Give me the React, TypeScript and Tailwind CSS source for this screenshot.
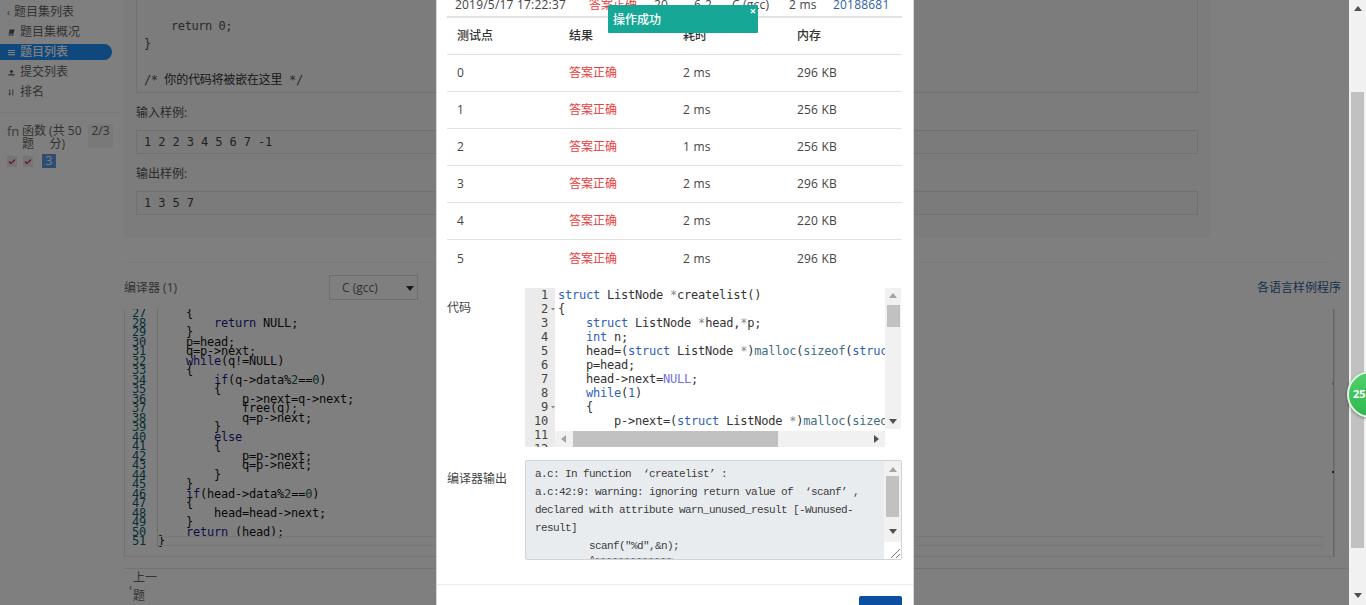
import { Fragment } from 'react'

const sans = { fontFamily: '"Open Sans","Noto Sans CJK SC",sans-serif' }

const testPoints = [
  ['0', '2 ms', '296 KB'],
  ['1', '2 ms', '256 KB'],
  ['2', '1 ms', '256 KB'],
  ['3', '2 ms', '296 KB'],
  ['4', '2 ms', '220 KB'],
  ['5', '2 ms', '296 KB'],
]

const problemCode: [number, string][] = [
  [26, '    if(head==NULL)'],
  [27, '    {'],
  [28, '        return NULL;'],
  [29, '    }'],
  [30, '    p=head;'],
  [31, '    q=p->next;'],
  [32, '    while(q!=NULL)'],
  [33, '    {'],
  [34, '        if(q->data%2==0)'],
  [35, '        {'],
  [36, '            p->next=q->next;'],
  [37, '            free(q);'],
  [38, '            q=p->next;'],
  [39, '        }'],
  [40, '        else'],
  [41, '        {'],
  [42, '            p=p->next;'],
  [43, '            q=p->next;'],
  [44, '        }'],
  [45, '    }'],
  [46, '    if(head->data%2==0)'],
  [47, '    {'],
  [48, '        head=head->next;'],
  [49, '    }'],
  [50, '    return (head);'],
  [51, '}'],
]

const submittedCode = [
  'struct ListNode *createlist()',
  '{',
  '    struct ListNode *head,*p;',
  '    int n;',
  '    head=(struct ListNode *)malloc(sizeof(struct ListNode));',
  '    p=head;',
  '    head->next=NULL;',
  '    while(1)',
  '    {',
  '        p->next=(struct ListNode *)malloc(sizeof(struct ListNode));',
  '',
  '',
]

function Highlight({ line, dark }: { line: string; dark?: boolean }) {
  const parts = line.split(/(\b(?:struct|int|while|if|else|return)\b|\bNULL\b|\b\d+\b|\bmalloc\b|\bsizeof\b|\*)/)
  return (
    <>
      {parts.map((part, i) => {
        let cls = ''
        if (/^(struct|int|while|if|else|return)$/.test(part)) cls = dark ? 'text-[#1c1c8c]' : 'text-[#2f5fb8]'
        else if (part === 'NULL') cls = dark ? '' : 'text-[#6f6fe0]'
        else if (/^\d+$/.test(part)) cls = dark ? 'text-[#0f5f4f]' : 'text-[#2f5fb8]'
        else if (part === 'malloc' || part === 'sizeof') cls = dark ? '' : 'text-[#3f6f80]'
        else if (part === '*') cls = dark ? '' : 'text-[#888888]'
        return (
          <span key={i} className={cls}>
            {part}
          </span>
        )
      })}
    </>
  )
}

function Triangle({ dir, className }: { dir: 'up' | 'down' | 'left' | 'right'; className?: string }) {
  const points = { up: '0,6 4,1 8,6', down: '0,2 8,2 4,7', left: '6,0 6,8 1,4', right: '2,0 2,8 7,4' }[dir]
  return (
    <svg viewBox="0 0 8 8" className={className}>
      <polygon points={points} fill="currentColor" />
    </svg>
  )
}

function Sidebar() {
  const item = 'flex h-5 items-center'
  return (
    <aside className="flex w-[124px] shrink-0 flex-col pt-[2px] text-[12px] text-[#666666]">
      <div className={`${item} pl-[7px]`}>
        <span className="w-[7px] text-[10px] leading-none">‹</span>题目集列表
      </div>
      <div className={`${item} pl-2`}>
        <svg viewBox="0 0 8 8" className="mr-[5px] h-[7px] w-[7px]">
          <path d="M2 0.5h5.5l-1.2 5H0.8zM0.5 6.3h6v1.2h-6z" fill="#555555" />
        </svg>
        题目集概况
      </div>
      <div className={`${item} pl-2`}>
        <div className="flex h-4 w-[112px] -translate-x-2 items-center rounded-r-full bg-[#1f90f8] pl-2 font-medium text-white">
          <svg viewBox="0 0 8 8" className="mr-[5px] h-[7px] w-[7px]">
            <path d="M0 1h8v1.2H0zM0 3.4h8v1.2H0zM0 5.8h8V7H0z" fill="#ffffff" />
          </svg>
          题目列表
        </div>
      </div>
      <div className={`${item} pl-2`}>
        <svg viewBox="0 0 8 8" className="mr-[5px] h-[7px] w-[7px]">
          <path d="M4 0.5L6.5 3.5H5V5H3V3.5H1.5zM0.5 6h7v1.5h-7z" fill="#555555" />
        </svg>
        提交列表
      </div>
      <div className={`${item} pl-2`}>
        <svg viewBox="0 0 8 8" className="mr-[5px] h-[7px] w-[7px]">
          <path d="M1.5 0.5h1v5h1L2 7.5 0.5 5.5h1zM5 0.5h1v7H5z" fill="#555555" />
        </svg>
        排名
      </div>
      <div className="mt-[10px] flex w-[120px] border-t border-[#f0f0f0] pl-[7px] pt-[11px]">
        <span className="mt-[1px] w-[15px] text-[13px] leading-[13px] text-[#777777]">fn</span>
        <div className="w-[66px] whitespace-pre leading-[13px]">
          {'函数 (共 50\n题     分)'}
        </div>
        <div className="flex h-[24px] w-[25px] items-start justify-center bg-[#f2f2f2] leading-[13px]">2/3</div>
      </div>
      <div className="ml-[7px] mt-[4px] flex items-center gap-[6px]">
        {[0, 1].map((n) => (
          <span key={n} className="flex h-[11px] w-[10px] items-center justify-center bg-[#e8e8e8]">
            <svg viewBox="0 0 8 8" className="h-2 w-2">
              <path d="M1 4.5l2 2 4-4" fill="none" stroke="#e0394a" strokeWidth="1.4" />
            </svg>
          </span>
        ))}
        <span className="ml-[3px] flex h-[14px] w-[14px] items-center justify-center bg-[#5b9be6] text-white">3</span>
      </div>
    </aside>
  )
}

function SampleBox({ label, value }: { label: string; value: string }) {
  return (
    <>
      <div className="mt-[11px] flex h-[18px] items-center text-[12px] text-[#555555]">{label}</div>
      <div
        className="mt-[8px] flex h-[24px] items-center border border-[#e3e3e3] bg-[#f7f7f7] pl-[7px] text-[12px] tracking-[-0.1px] text-[#444444]"
        style={{ fontFamily: '"DejaVu Sans Mono",monospace' }}
      >
        {value}
      </div>
    </>
  )
}

function ProblemPanel() {
  return (
    <section className="h-[237px] w-[1086px] shrink-0 bg-[#f8f8f8] px-[12px]">
      <div
        className="h-[93px] whitespace-pre border-b border-l border-r border-[#e3e3e3] pl-[7px] pt-[17px] text-[12px] leading-[18px] tracking-[-0.45px] text-[#555555]"
        style={{ fontFamily: '"DejaVu Sans Mono","Noto Sans CJK SC",monospace' }}
      >
        {'    return 0;\n}\n\n/* '}
        <span className="tracking-[-0.2px] text-[#333333]">你的代码将被嵌在这里</span>
        {' */'}
      </div>
      <SampleBox label="输入样例:" value="1 2 2 3 4 5 6 7 -1" />
      <SampleBox label="输出样例:" value="1 3 5 7" />
    </section>
  )
}

function CodeEditor() {
  return (
    <div className="relative h-[248px] w-[1211px] shrink-0 overflow-hidden border-x border-b border-[#e6e6e6]">
      <div
        className="-mt-[9.5px] flex text-[12px] tracking-[-0.22px]"
        style={{ fontFamily: '"DejaVu Sans Mono",monospace' }}
      >
        <div className="w-[21px] shrink-0 text-right text-[#0f5f6f]">
          {problemCode.map(([n]) => (
            <div key={n} className="h-[9.5px] leading-[9.5px]">
              {n}
            </div>
          ))}
        </div>
        <div className="ml-[11px] border-l border-[#dddddd] text-[#111111]">
          {problemCode.map(([n, line]) => (
            <div key={n} className="h-[9.5px] whitespace-pre leading-[9.5px]">
              <Highlight line={line} dark />
            </div>
          ))}
        </div>
      </div>
      <div className="absolute bottom-[10px] left-[33px] right-[10px] h-[10px] border-y border-[#eeeeee]" />
      <div className="absolute bottom-0 right-0 top-0 w-px bg-[#cccccc]" />
      <div className="absolute right-[-1px] top-[73px] h-[3px] w-[3px] bg-[#bbbbbb]" />
      <div className="absolute right-[-5px] top-[162px] h-[2px] w-[7px] bg-[#444444]" />
    </div>
  )
}

function PageContent() {
  return (
    <div className="flex h-full bg-white" style={sans}>
      <Sidebar />
      <main className="flex min-w-0 flex-1 flex-col">
        <ProblemPanel />
        <div className="mt-[25px] h-px w-[1210px] shrink-0 bg-[#f5f5f5]" />
        <div className="mt-[7px] flex h-[39px] w-[1217px] shrink-0 items-start justify-between pt-[5px] text-[12px] text-[#666666]">
          <span className="leading-[25px]">编译器 (1)</span>
          <div className="ml-[152px] flex h-[25px] w-[89px] items-center justify-between border border-[#dddddd] pl-3 pr-[3px] text-[12px]">
            C (gcc)
            <Triangle dir="down" className="h-2 w-2 text-[#333333]" />
          </div>
          <span className="ml-auto leading-[25px] text-[#335f9e]">各语言样例程序</span>
        </div>
        <CodeEditor />
        <div className="mt-[11px] h-px w-[1225px] shrink-0 bg-[#e6e6e6]" />
        <div className="ml-[5px] flex shrink-0 items-center text-[12px] leading-[18px] text-[#666666]">
          <span className="mr-[1px] text-[10px]">‹</span>
          <span className="w-[25px]">上一题</span>
        </div>
      </main>
    </div>
  )
}

function ModalTable() {
  const cols = 'grid grid-cols-[112px_114px_114px_1fr] pl-[10px]'
  return (
    <div className="-mt-[6px] mr-px text-[12px] tracking-[0.2px] text-[#444444]">
      <div className="flex h-[24px] items-center border-b-2 border-[#e2e2e2] pl-2">
        <span className="w-[134px]">2019/5/17 17:22:37</span>
        <span className="w-[65px] tracking-normal text-[#e64040]">答案正确</span>
        <span className="w-[40px]">20</span>
        <span className="w-[38px]">6-2</span>
        <span className="w-[57px]">C (gcc)</span>
        <span className="w-[44px]">2 ms</span>
        <span className="text-[#2f5fa0]">20188681</span>
      </div>
      <div
        className={`${cols} h-[37px] items-center border-b border-[#e2e2e2] pb-[1px] font-medium tracking-normal text-[#333333]`}
      >
        <span>测试点</span>
        <span>结果</span>
        <span>耗时</span>
        <span>内存</span>
      </div>
      {testPoints.map((row, i) => (
        <div
          key={row[0]}
          className={`${cols} h-[37px] items-center ${i < testPoints.length - 1 ? 'border-b border-[#e2e2e2]' : ''}`}
        >
          <span>{row[0]}</span>
          <span className="tracking-normal text-[#e64040]">答案正确</span>
          <span>{row[1]}</span>
          <span>{row[2]}</span>
        </div>
      ))}
    </div>
  )
}

function AceEditor() {
  return (
    <div
      className="relative h-[159px] w-[376px] overflow-hidden text-[12px] tracking-[-0.22px]"
      style={{ fontFamily: '"DejaVu Sans Mono",monospace' }}
    >
      <div className="flex">
        <div className="h-[159px] w-[30px] shrink-0 bg-[#ebebeb] text-[#444444]">
          {submittedCode.map((_, i) => (
            <div key={i} className="relative h-[14px] pr-[7px] text-right leading-[14px]">
              {i + 1}
              {(i === 1 || i === 8) && (
                <Triangle dir="down" className="absolute right-0 top-[5px] h-1 w-1 text-[#888888]" />
              )}
            </div>
          ))}
        </div>
        <div className="min-w-0 flex-1 overflow-hidden pl-[3px] text-[#333333]">
          {submittedCode.map((line, i) => (
            <div key={i} className="h-[14px] whitespace-pre leading-[14px]">
              <Highlight line={line} />
            </div>
          ))}
        </div>
      </div>
      <div className="absolute bottom-[18px] right-0 top-0 flex w-[16px] flex-col items-center bg-[#f1f1f1]">
        <Triangle dir="up" className="mt-[4px] h-2 w-2 text-[#a3a3a3]" />
        <div className="mt-[5px] h-[22px] w-[13px] bg-[#c1c1c1]" />
        <Triangle dir="down" className="mt-[90px] h-2 w-2 text-[#505050]" />
      </div>
      <div className="absolute bottom-0 left-[30px] right-[16px] flex h-[16px] items-center bg-[#f1f1f1]">
        <Triangle dir="left" className="ml-[5px] h-2 w-2 text-[#a3a3a3]" />
        <div className="ml-[5px] h-[16px] w-[205px] bg-[#c1c1c1]" />
        <Triangle dir="right" className="ml-auto mr-[5px] h-2 w-2 text-[#505050]" />
      </div>
    </div>
  )
}

function CompilerOutput() {
  return (
    <div className="relative h-[100px] w-[377px] overflow-hidden rounded-[2px] border border-[#ced4da] bg-[#e9ecef]">
      <div
        className="whitespace-pre pl-[9px] pt-[4px] text-[11px] leading-[18px] tracking-[-0.6px] text-[#3c3c3c]"
        style={{ fontFamily: '"Liberation Mono","Noto Sans CJK SC",monospace' }}
      >
        {'a.c: In function  ‘createlist’ :\na.c:42:9: warning: ignoring return value of  ‘scanf’ ,\ndeclared with attribute warn_unused_result [-Wunused-\nresult]\n         scanf("%d",&n);'}
        <div className="-mt-[4px]">{'         ^~~~~~~~~~~~~~'}</div>
      </div>
      <div className="absolute right-0 top-0 flex h-[82px] w-[17px] flex-col items-center bg-[#f1f1f1]">
        <Triangle dir="up" className="mt-[5px] h-2 w-2 text-[#a3a3a3]" />
        <div className="mt-[2px] h-[41px] w-[13px] bg-[#c1c1c1]" />
        <Triangle dir="down" className="mt-[10px] h-2 w-2 text-[#505050]" />
      </div>
      <div className="absolute bottom-0 right-0 flex h-[17px] w-[17px] items-end justify-end bg-white">
        <svg viewBox="0 0 12 12" className="h-3 w-3">
          <path d="M2 11L11 2M7 11l4-4" stroke="#777777" strokeWidth="1" fill="none" />
        </svg>
      </div>
    </div>
  )
}

function Modal() {
  return (
    <div
      className="absolute bottom-0 left-[436px] top-0 flex w-[478px] flex-col overflow-hidden border-x border-[#d8d8d8] bg-white"
      style={sans}
    >
      <div className="shrink-0 px-[10px]">
        <ModalTable />
        <div className="mt-[11px] flex text-[12px] text-[#444444]">
          <div className="w-[78px] pt-[12px] leading-[16px]">代码</div>
          <AceEditor />
        </div>
        <div className="mt-[13px] flex text-[12px] text-[#444444]">
          <div className="w-[78px] pt-[11px] leading-[16px]">编译器输出</div>
          <CompilerOutput />
        </div>
      </div>
      <div className="mt-[24px] flex shrink-0 border-t border-[#e9ecef] pr-[11px] pt-[11px]">
        <button className="ml-auto h-[32px] w-[43px] rounded-[2px] bg-[#0b4ea2] text-[12px] text-white">关闭</button>
      </div>
    </div>
  )
}

function PageScrollbar() {
  return (
    <div className="flex w-[17px] shrink-0 flex-col items-center bg-[#f1f1f1]">
      <Triangle dir="up" className="mt-[5px] h-2 w-2 shrink-0 text-[#505050]" />
      <div className="mt-[79px] h-[456px] w-[13px] shrink-0 bg-[#c1c1c1]" />
      <Triangle dir="down" className="mt-[43px] h-2 w-2 shrink-0 text-[#505050]" />
    </div>
  )
}

export default function App() {
  return (
    <Fragment>
      <div className="relative flex h-[605px] w-[1366px] overflow-hidden bg-white">
        <div className="relative h-full w-[1349px] overflow-hidden">
          <PageContent />
          <div className="absolute inset-0 bg-black/50" />
        </div>
        <PageScrollbar />
        <Modal />
        <div
          className="absolute left-[608px] top-[5px] h-[28px] w-[150px] rounded-[1px] bg-[#17a797] pl-[5px] pt-[5px] text-[12px] font-medium leading-[19px] text-white"
          style={sans}
        >
          操作成功
          <span className="absolute right-[2px] top-0 text-[11px] font-bold leading-[11px]">×</span>
        </div>
        <div
          className="absolute left-[1347px] top-[371px] flex h-[47px] w-[47px] items-center rounded-full border-2 border-[#e2f5e4] bg-gradient-to-b from-[#4fd06a] to-[#2fb84f] pl-[4px] text-[11px] font-bold text-white shadow-[0_1px_3px_rgba(0,0,0,0.4)]"
          style={sans}
        >
          25
        </div>
      </div>
    </Fragment>
  )
}
